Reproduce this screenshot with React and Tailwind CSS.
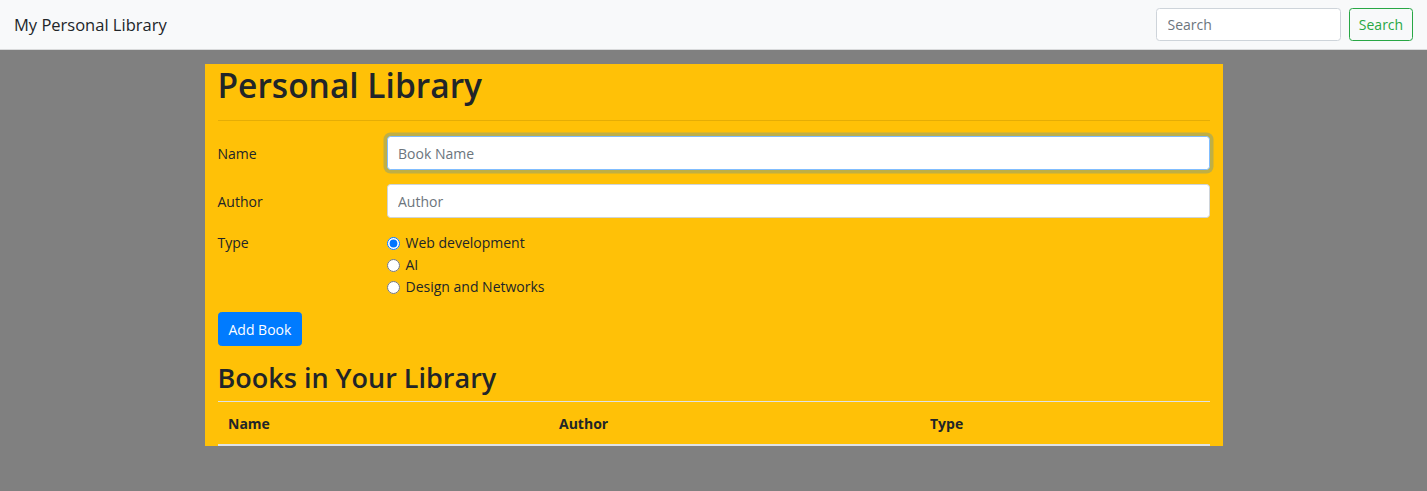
import React from "react";

const font = { fontFamily: '"Open Sans", "Noto Sans", sans-serif' };

const Navbar = () => (
  <nav className="h-[50px] bg-[#f8f9fa] border-b border-[#d9dadb] flex items-center justify-between px-[14px]">
    <a href="#" className="text-[16.5px] text-[#212529] leading-none pt-[2px]">
      My Personal Library
    </a>
    <form className="flex items-center gap-[8px]" onSubmit={(e) => e.preventDefault()}>
      <input
        type="search"
        placeholder="Search"
        className="w-[185px] h-[33px] px-[10.5px] text-[14px] bg-white border border-[#ced4da] rounded-[3.5px] placeholder:text-[#6c757d] outline-none"
      />
      <button className="w-[64px] h-[33px] text-[14px] text-[#28a745] border border-[#28a745] rounded-[3.5px] bg-transparent">
        Search
      </button>
    </form>
  </nav>
);

const types = ["Web development", "AI", "Design and Networks"];

export default function App() {
  return (
    <div style={font} className="min-h-[491px] bg-[#808080] text-[#212529]">
      <Navbar />
      <main className="pt-[14px]">
        <div className="w-[1018px] mx-auto bg-[#ffc107] px-[13px]">
          <h1 className="text-[33.5px] leading-[42px] font-semibold">Personal Library</h1>
          <hr className="mt-[14px] mb-[15px] border-0 border-t border-[rgba(0,0,0,0.1)]" />

          <form onSubmit={(e) => e.preventDefault()}>
            <div className="flex items-center mb-[14px]">
              <label className="w-[169px] text-[14px]">Name</label>
              <input
                type="text"
                placeholder="Book Name"
                autoFocus
                className="flex-1 h-[34px] px-[10.5px] text-[14px] bg-white border border-[#80bdff] rounded-[3.5px] shadow-[0_0_0_3.5px_rgba(0,123,255,0.25)] placeholder:text-[#6c757d] outline-none"
              />
            </div>
            <div className="flex items-center mb-[14px]">
              <label className="w-[169px] text-[14px]">Author</label>
              <input
                type="text"
                placeholder="Author"
                className="flex-1 h-[34px] px-[10.5px] text-[14px] bg-white border border-[#ced4da] rounded-[3.5px] placeholder:text-[#6c757d] outline-none"
              />
            </div>
            <div className="flex mb-[14px]">
              <span className="w-[169px] text-[14px] leading-[22px]">Type</span>
              <div className="flex flex-col">
                {types.map((t, i) => (
                  <label key={t} className="flex items-center gap-[6px] text-[14px] leading-[22px]">
                    <input
                      type="radio"
                      name="type"
                      defaultChecked={i === 0}
                      className="m-0 w-[13px] h-[13px] accent-[#0075ff]"
                    />
                    {t}
                  </label>
                ))}
              </div>
            </div>
            <button className="h-[34px] px-[10px] text-[14px] text-white bg-[#007bff] border border-[#007bff] rounded-[3.5px]">
              Add Book
            </button>
          </form>

          <h2 className="mt-[15px] mb-[6px] text-[27px] leading-[34px] font-semibold">Books in Your Library</h2>
          <table className="w-full text-[14px] border-collapse">
            <thead>
              <tr>
                <th className="w-[331px] text-left font-bold px-[10.5px] pt-[11px] pb-[10px] leading-[21px] border-t border-b-2 border-[#dee2e6]">Name</th>
                <th className="w-[371px] text-left font-bold px-[10.5px] pt-[11px] pb-[10px] leading-[21px] border-t border-b-2 border-[#dee2e6]">Author</th>
                <th className="text-left font-bold px-[10.5px] pt-[11px] pb-[10px] leading-[21px] border-t border-b-2 border-[#dee2e6]">Type</th>
              </tr>
            </thead>
            <tbody></tbody>
          </table>
        </div>
      </main>
    </div>
  );
}
